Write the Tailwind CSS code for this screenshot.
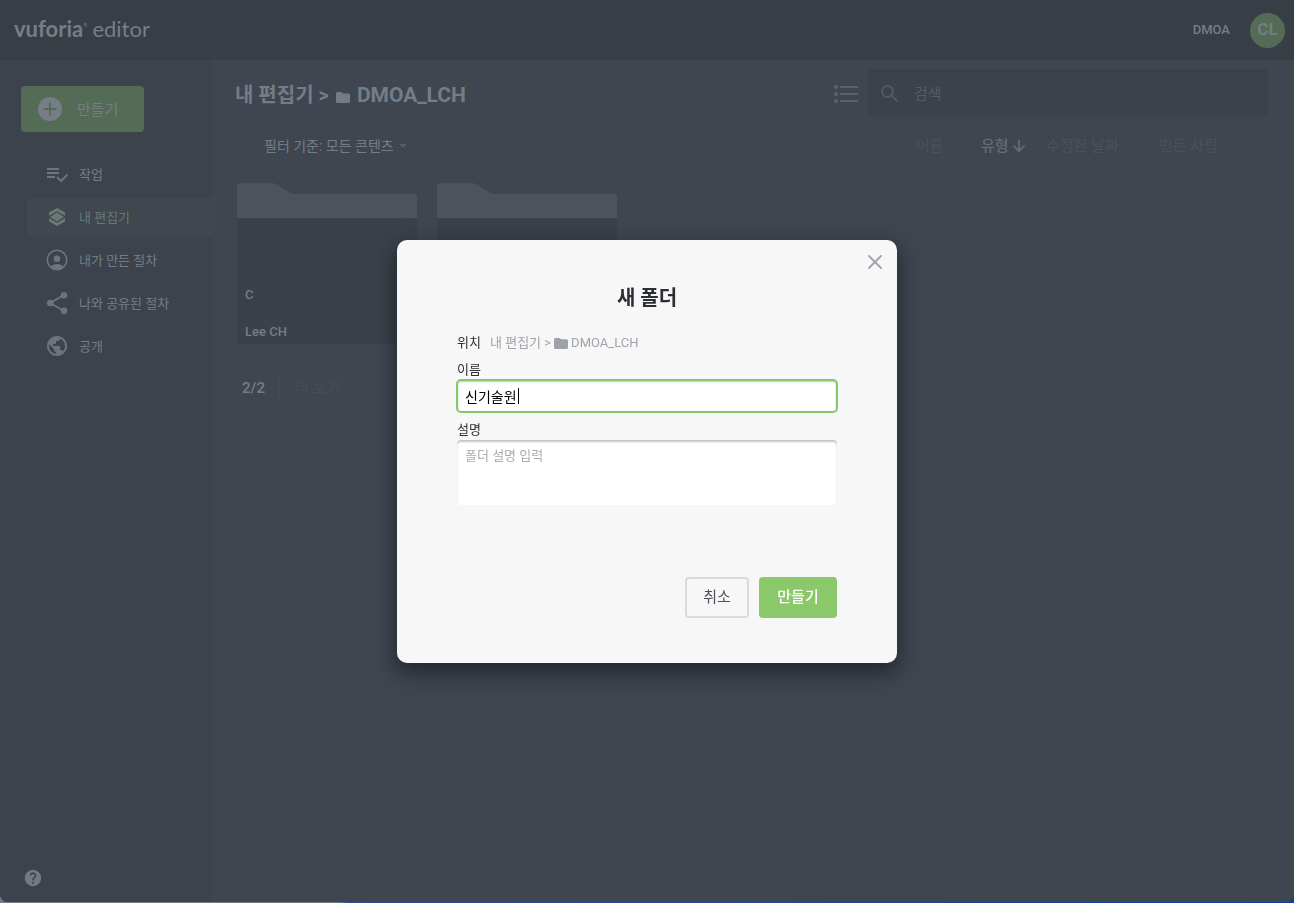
<!DOCTYPE html>
<html lang="ko">
<head>
<meta charset="utf-8">
<meta name="viewport" content="width=device-width, initial-scale=1">
<title>vuforia editor</title>
<script src="https://cdn.jsdelivr.net/npm/@tailwindcss/browser@4"></script>
</head>
<body class="flex min-h-screen flex-col bg-linear-to-r from-[#717b88] from-26% via-[#2c4f86] via-27% to-[#123f9a] pb-px font-['Roboto','Noto_Sans_CJK_KR',sans-serif] text-[13px] text-[#767c85]">
<div class="flex grow flex-col overflow-hidden rounded-b-lg bg-[#3f4650]">
  <header class="flex h-15 items-center justify-between bg-[#373e46] pr-[9px] pl-[14px]">
    <a href="#" class="flex items-center gap-[5px] pb-[2px] font-['Lato',sans-serif] text-[22px] leading-7 text-[#777d86]"><span class="flex font-bold">vuforia<span class="text-[5px] leading-5 font-normal">®</span></span><span>editor</span></a>
    <div class="flex items-center gap-5">
      <span class="font-medium">DMOA</span>
      <button type="button" class="size-[35px] rounded-full bg-[#546c57] text-[17px] font-bold">CL</button>
    </div>
  </header>

  <div class="flex grow">
    <aside class="flex w-[212px] flex-col bg-[#3c434d] pt-[26px] pb-[15px]">
      <button type="button" class="ml-[21px] flex h-[46px] w-[123px] items-center gap-[15px] rounded bg-[#546c56] pl-[17px] text-[15px]">
        <svg class="size-6" viewBox="0 0 24 24"><circle cx="12" cy="12" r="12" fill="#777d87"/><path d="M12 5.500v13M5.500 12h13" stroke="#546c56" stroke-width="2"/></svg><span class="pt-[2px]">만들기</span></button>
      <nav class="mt-[23px] ml-[27px] flex flex-col gap-[5px]">
        <a href="#" class="flex h-[38px] items-center gap-[10px] pl-[18px]">
          <svg class="size-6" viewBox="0 0 24 24" fill="none" stroke="#6d747c" stroke-width="2"><path d="M2 7h12M2 11h12M2 15h8M12 15l4 4 6.500-6.500"/></svg><span class="pt-[2px]">작업</span></a>
        <a href="#" class="flex h-[38px] items-center gap-[10px] rounded-l bg-[#40474f] pl-[18px] text-[#647b77]">
          <svg class="size-6" viewBox="0 0 24 24" fill="#6a7a72"><path d="M12 3l8 4.500v3.200L12 6.300l-8 4.400V7.500zM12 21l8-4.500v-3.200l-8 4.400-8-4.400v3.200zM12 7.500l7 4.500-7 4.500L5 12z"/></svg><span class="pt-[2px]">내 편집기</span></a>
        <a href="#" class="flex h-[38px] items-center gap-[10px] pl-[18px]">
          <svg class="size-6" viewBox="0 0 24 24" fill="#6d747c"><circle cx="12" cy="12" r="9.700" fill="none" stroke="#6d747c" stroke-width="1.600"/><circle cx="12" cy="10.800" r="3.300"/><path d="M5.500 19c1.500-2 3.800-3 6.500-3s5 1 6.500 3c-1.700 1.800-4 2.700-6.500 2.700S7.200 20.800 5.500 19z"/></svg><span class="pt-[2px]">내가 만든 절차</span></a>
        <a href="#" class="flex h-[38px] items-center gap-[10px] pl-[18px]">
          <svg class="size-6" viewBox="0 0 24 24" fill="#6d747c"><path d="M19 4L5 12l14 8" fill="none" stroke="#6d747c" stroke-width="1.800"/><circle cx="19" cy="4.300" r="3.300"/><circle cx="5.300" cy="12" r="3.300"/><circle cx="19" cy="19.700" r="3.300"/></svg><span class="pt-[2px]">나와 공유된 절차</span></a>
        <a href="#" class="flex h-[38px] items-center gap-[10px] pl-[18px]">
          <svg class="size-6" viewBox="0 0 24 24" fill="#6d747c"><path d="M12 2C6.480 2 2 6.480 2 12s4.480 10 10 10 10-4.480 10-10S17.520 2 12 2zm-1 17.930c-3.950-.49-7-3.850-7-7.930 0-.62.080-1.210.210-1.790L9 15v1c0 1.100.9 2 2 2v1.930zm6.900-2.540c-.26-.81-1-1.390-1.900-1.390h-1v-3c0-.55-.45-1-1-1H8v-2h2c.55 0 1-.45 1-1V7h2c1.100 0 2-.9 2-2v-.41c2.930 1.190 5 4.060 5 7.410 0 2.080-.8 3.970-2.100 5.390z"/></svg><span class="pt-[2px]">공개</span></a>
      </nav>
      <button type="button" aria-label="도움말" class="mt-auto ml-6 size-[18px]">
        <svg class="size-[18px]" viewBox="1 1 22 22" fill="#727981"><path d="M12 2C6.480 2 2 6.480 2 12s4.480 10 10 10 10-4.480 10-10S17.520 2 12 2zm1 17h-2v-2h2v2zm2.070-7.750l-.9.920C13.450 12.900 13 13.500 13 15h-2v-.5c0-1.100.45-2.100 1.170-2.830l1.240-1.260c.37-.36.59-.86.590-1.410 0-1.100-.9-2-2-2s-2 .9-2 2H8c0-2.210 1.790-4 4-4s4 1.790 4 4c0 .88-.36 1.680-.93 2.250z"/></svg>
      </button>
    </aside>

    <main class="min-w-0 grow px-[23px] pt-[10px]">
      <div class="flex h-[47px] items-center">
        <h1 class="flex grow items-center gap-[7px] pt-[2px] text-[20px] font-bold"><span>내 편집기 &gt;</span>
          <svg class="mt-1 h-3 w-[14px] shrink-0" viewBox="0 0 14 12" fill="#747b85"><path d="M1.500 1h4L7 2.500h5.500A1.500 1.500 0 0114 4v6.500a1.500 1.500 0 01-1.500 1.500h-11A1.500 1.500 0 010 10.500v-8A1.500 1.500 0 011.500 1z"/></svg>
          <span class="pt-[2px] text-[21px]">DMOA_LCH</span></h1>
        <button type="button" aria-label="목록 보기" class="mr-[10px] h-[18px] w-6 shrink-0">
          <svg class="h-[18px] w-6" viewBox="0 0 24 18" fill="#5b626c"><path d="M6 1h18v2H6zM6 8h18v2H6zM6 15h18v2H6z"/><circle cx="2" cy="2" r="2"/><circle cx="2" cy="9" r="2"/><circle cx="2" cy="16" r="2"/></svg>
        </button>
        <label class="mr-[3px] flex h-[47px] w-[400px] items-center gap-[15px] rounded bg-[#3b424c] pl-3 inset-shadow-[0_1px_1px_#373e47]">
          <svg class="size-[19px]" viewBox="0 0 19 19" fill="none" stroke="#525963" stroke-width="2"><circle cx="7.500" cy="7.500" r="5.500"/><path d="M11.500 11.500l6 6"/></svg>
          <input type="search" aria-label="검색" placeholder="검색" class="min-w-0 grow bg-transparent pt-[2px] text-[15px] placeholder:text-[#545b65]">
        </label>
      </div>

      <div class="mt-4 flex h-[26px] items-center justify-between pl-[29px]">
        <button type="button" class="flex items-center gap-[5px] text-[14px]">필터 기준: 모든 콘텐츠<svg class="h-1 w-2" viewBox="0 0 8 4"><path d="M0 0h8L4 4z" fill="#555c66"/></svg></button>
        <div class="flex w-[355px] text-[15px] text-[#4a515b]">
          <button type="button" class="w-[65px] text-left">이름</button>
          <button type="button" class="flex w-[65px] items-center gap-[3px] font-medium text-[#646b75]">유형<svg class="size-[14px]" viewBox="0 0 14 14" fill="none" stroke="#646b75" stroke-width="1.800"><path d="M7 1v11M1.500 6.700L7 12.200l5.500-5.500"/></svg></button>
          <button type="button" class="w-[113px] text-left">수정한 날짜</button>
          <button type="button">만든 사람</button>
        </div>
      </div>

      <div class="mt-6 flex gap-5 pl-[2px] font-medium">
        <a href="#" class="flex w-[180px] flex-col">
          <svg class="h-[35px] w-[180px]" viewBox="0 0 180 35" fill="#4c535d"><path d="M0 4a4 4 0 014-4h31q3 0 5 2l15 9h121a4 4 0 014 4v20H0z"/></svg>
          <span class="flex h-[126px] flex-col justify-end gap-[17px] rounded-b bg-[#3a4149] px-2 pb-[2px] leading-5">
            <span>C</span>
            <span>Lee CH</span>
          </span>
        </a>
        <a href="#" aria-label="폴더" class="flex w-[180px] flex-col">
          <svg class="h-[35px] w-[180px]" viewBox="0 0 180 35" fill="#4c535d"><path d="M0 4a4 4 0 014-4h31q3 0 5 2l15 9h121a4 4 0 014 4v20H0z"/></svg>
          <span class="h-[126px] rounded-b bg-[#3a4149]"></span>
        </a>
      </div>

      <div class="mt-[29px] flex h-[30px] items-center pl-[7px]">
        <span class="w-[37px] text-[15px] font-medium">2/2</span>
        <button type="button" class="h-full border-l border-[#454b55] pl-[15px] text-[15px] text-[#464d57]">더 보기</button>
      </div>
    </main>
  </div>
</div>

<div class="fixed inset-0 flex items-center justify-center">
  <form role="dialog" aria-modal="true" aria-labelledby="dialog-title" class="relative flex w-[500px] flex-col rounded-[10px] bg-[#f7f7f7] px-15 pt-[43px] pb-[45px] text-[#2b2f33] shadow-[0_8px_20px_2px_rgba(15,22,30,0.6)]">
    <button type="button" aria-label="닫기" class="absolute top-[15px] right-[15px] size-[14px]">
      <svg class="size-[14px]" viewBox="0 0 14 14" stroke="#9fa3aa" stroke-width="1.800" stroke-linecap="round"><path d="M1 1l12 12M13 1L1 13"/></svg>
    </button>
    <h2 id="dialog-title" class="text-center text-[20px] leading-[30px] font-bold">새 폴더</h2>
    <div class="mt-5 flex h-5 items-center text-[#9fa3aa]">
      <span class="w-[33px] text-[#2b2f33]">위치</span>
      <span>내 편집기 &gt;</span>
      <svg class="mr-[3px] ml-[3px] h-[11px] w-[14px]" viewBox="0 0 14 11" fill="#9ea2ab"><path d="M1.500 0h4L7 1.300h5.500A1.500 1.500 0 0114 2.800v6.700a1.500 1.500 0 01-1.500 1.500h-11A1.500 1.500 0 010 9.500v-8A1.500 1.500 0 011.500 0z"/></svg>
      <span>DMOA_LCH</span>
    </div>
    <label for="folder-name" class="mt-2 leading-[18px]">이름</label>
    <div class="relative -mx-px flex">
      <input id="folder-name" type="text" value="신기술원" autofocus class="h-[34px] w-full rounded-[5px] border-2 border-[#88c768] bg-white px-[7px] text-[14px] text-black caret-transparent inset-shadow-[0_1px_2px_#c5c8ca] outline-none">
      <span class="absolute top-[9px] left-[62px] h-4 w-px bg-black"></span>
    </div>
    <label for="folder-description" class="mt-[7px] leading-5">설명</label>
    <textarea id="folder-description" placeholder="폴더 설명 입력" class="h-[65px] resize-none rounded bg-white px-2 py-[6px] leading-5 inset-shadow-[0_2px_2px_#c2c5c6] placeholder:text-[#a8abb1]"></textarea>
    <div class="mt-[72px] flex justify-end gap-[10px] text-[15px]">
      <button type="button" class="h-[41px] w-16 rounded border-2 border-[#d6dbdf] text-[#4e515c]">취소</button>
      <button type="submit" class="h-[41px] w-[78px] rounded bg-[#8ac869] font-medium text-white">만들기</button>
    </div>
  </form>
</div>
</body>
</html>
